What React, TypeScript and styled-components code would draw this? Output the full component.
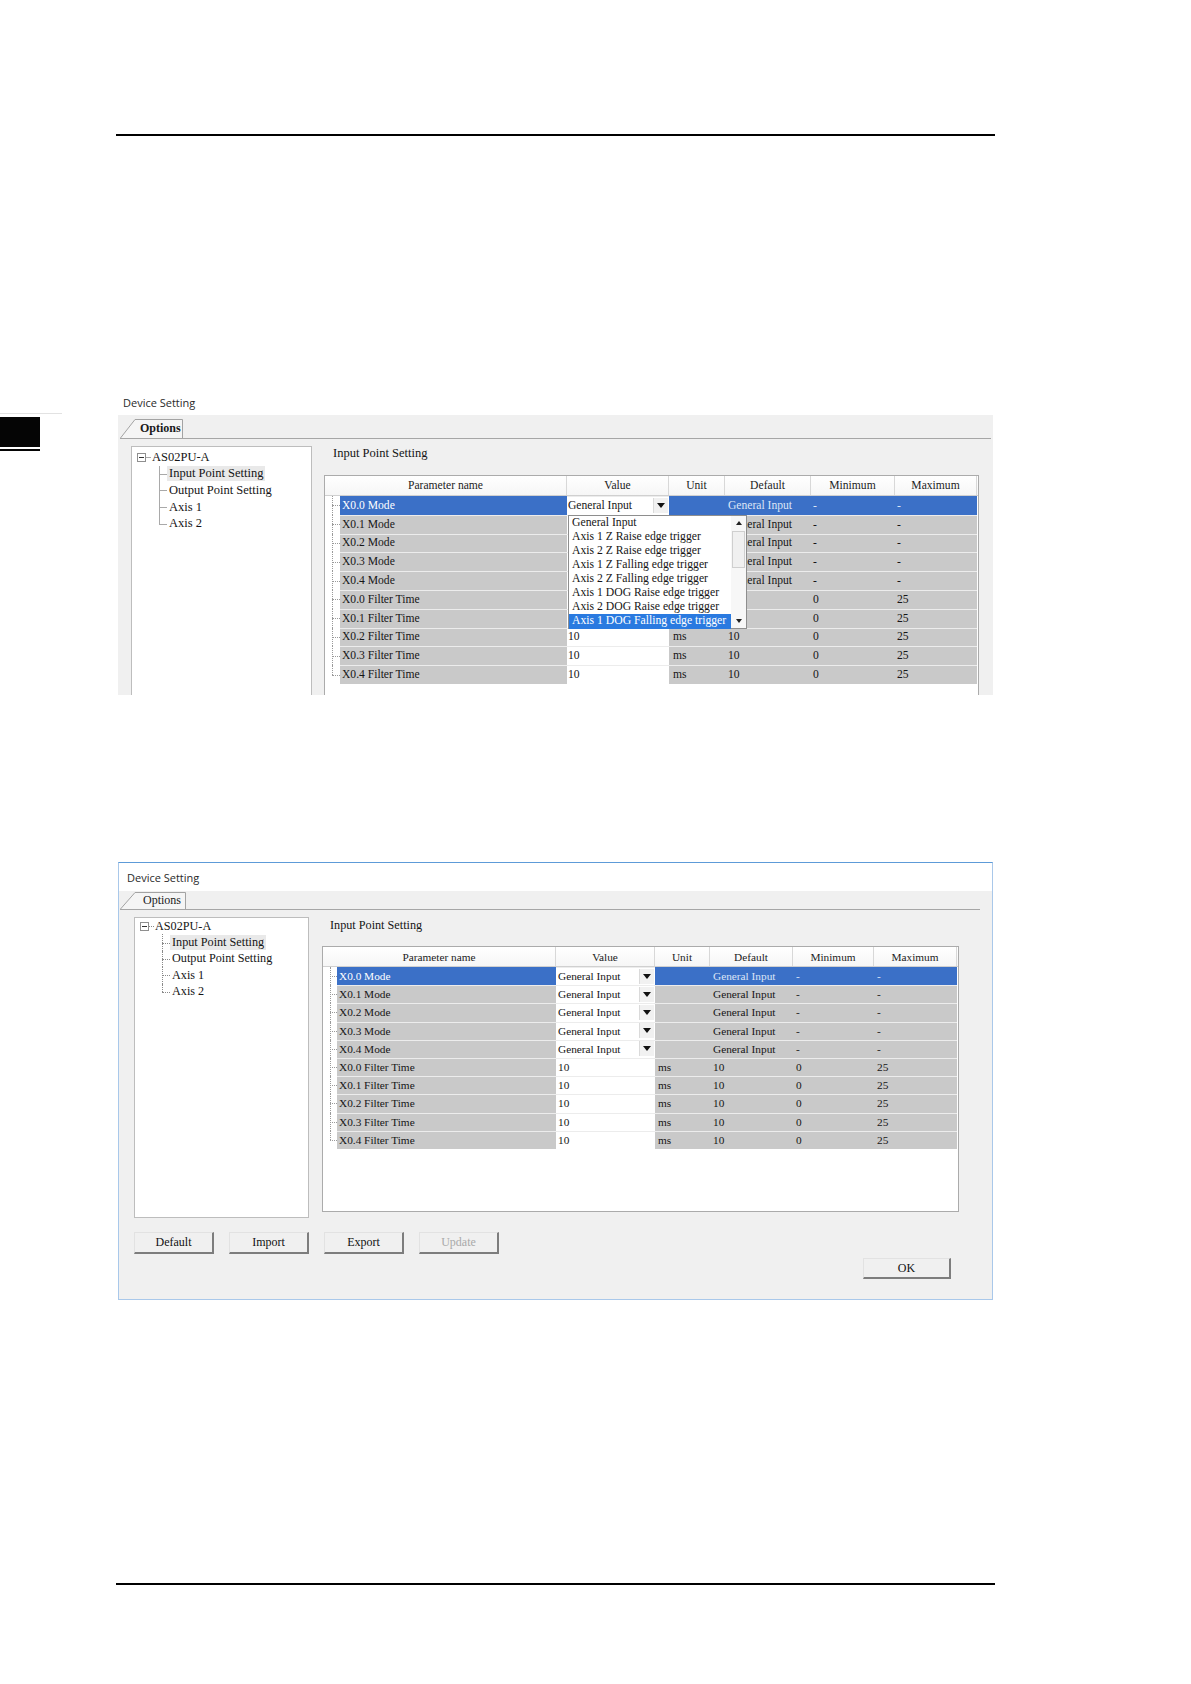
import React from 'react';
import styled, { createGlobalStyle } from 'styled-components';

const GlobalStyle = createGlobalStyle`
  html, body {
    margin: 0;
    padding: 0;
    background: #fff;
  }
  body {
    font-family: "Liberation Serif", "Times New Roman", serif;
    color: #111;
  }
  * {
    box-sizing: border-box;
  }
`;

type RowData = {
  name: string;
  value: string;
  combo: boolean;
  unit: string;
  def: string;
  min: string;
  max: string;
};

type Metrics = {
  cols: number[];
  pads: number[];
  rowH: number;
  headH: number;
  font: number;
};

const modeRow = (n: number): RowData => ({
  name: `X0.${n} Mode`,
  value: 'General Input',
  combo: true,
  unit: '',
  def: 'General Input',
  min: '-',
  max: '-',
});

const filterRow = (n: number): RowData => ({
  name: `X0.${n} Filter Time`,
  value: '10',
  combo: false,
  unit: 'ms',
  def: '10',
  min: '0',
  max: '25',
});

const rows: RowData[] = [0, 1, 2, 3, 4].map(modeRow).concat([0, 1, 2, 3, 4].map(filterRow));

const dropItems = [
  'General Input',
  'Axis 1 Z Raise edge trigger',
  'Axis 2 Z Raise edge trigger',
  'Axis 1 Z Falling edge trigger',
  'Axis 2 Z Falling edge trigger',
  'Axis 1 DOG Raise edge trigger',
  'Axis 2 DOG Raise edge trigger',
  'Axis 1 DOG Falling edge trigger',
];

const treeItems = ['Input Point Setting', 'Output Point Setting', 'Axis 1', 'Axis 2'];

const metrics1: Metrics = {
  cols: [15, 227, 102, 56, 86, 84, 82],
  pads: [0, 2, 1, 4, 3, 2, 2],
  rowH: 18.8,
  headH: 21,
  font: 11.6,
};

const metrics2: Metrics = {
  cols: [14, 219, 99, 55, 83, 81, 83],
  pads: [0, 2, 2, 3, 3, 3, 3],
  rowH: 18.2,
  headH: 21,
  font: 11.3,
};

// rows whose value/unit (and default) sit under the open list
const coveredValue = (i: number) => i >= 1 && i <= 6;
const coveredDefault = (i: number) => i === 5 || i === 6;

/* page furniture */

const Page = styled.div`
  width: 1191px;
  height: 1684px;
  padding-top: 134px;
  overflow: hidden;
`;

const Rule = styled.div<{ $top: number; $h: number }>`
  margin: ${(p) => p.$top}px 0 0 116px;
  width: 879px;
  height: ${(p) => p.$h}px;
  background: #000;
`;

const FigureRow = styled.div`
  display: flex;
  align-items: flex-start;
  margin-top: 259px;
`;

const Marker = styled.div`
  width: 62px;
  margin-top: 18px;
  display: flex;
  flex-direction: column;
`;

const FaintLine = styled.div`
  height: 1px;
  width: 62px;
  background: #e2e2e2;
`;

const MarkBlock = styled.div`
  margin-top: 3px;
  width: 40px;
  height: 30px;
  background: #050505;
`;

const MarkLine = styled.div`
  margin-top: 2px;
  width: 40px;
  height: 2px;
  background: #050505;
`;

/* dialog shells */

const Shot = styled.div`
  margin-left: 56px;
  width: 875px;
`;

const ShotTitle = styled.div`
  height: 20px;
  padding-left: 5px;
  font-family: "Open Sans", "Noto Sans", sans-serif;
  font-size: 11px;
  line-height: 16px;
  color: #2a2a2a;
`;

const Window = styled.div`
  margin: 167px 0 0 118px;
  width: 875px;
  height: 438px;
  border: 1px solid #a9c8ea;
  border-top-color: #5d9bd8;
  display: flex;
  flex-direction: column;
`;

const TitleBar = styled.div`
  height: 28px;
  flex-shrink: 0;
  background: #fff;
  padding-left: 8px;
  display: flex;
  align-items: center;
  font-family: "Open Sans", "Noto Sans", sans-serif;
  font-size: 11px;
  color: #2a2a2a;
`;

const Body = styled.div<{ $h?: number }>`
  background: #f0f0f0;
  display: flex;
  flex-direction: column;
  overflow: hidden;
  ${(p) => (p.$h ? `height: ${p.$h}px;` : 'flex: 1;')}
`;

const TabStrip = styled.div<{ $mt: number; $ml: number; $mr: number; $h: number }>`
  display: flex;
  flex-shrink: 0;
  height: ${(p) => p.$h}px;
  margin: ${(p) => `${p.$mt}px ${p.$mr}px 0 ${p.$ml}px`};
  border-bottom: 1px solid #a6a6a6;
`;

const TabShape = styled.div<{ $w: number; $bold?: boolean; $pad: number }>`
  position: relative;
  width: ${(p) => p.$w}px;
  height: 100%;
  padding-left: ${(p) => p.$pad}px;
  display: flex;
  align-items: center;
  font-size: 12px;
  font-weight: ${(p) => (p.$bold ? 700 : 400)};
  color: #1a1a1a;

  svg {
    position: absolute;
    left: 0;
    top: 0;
  }

  span {
    position: relative;
  }
`;

const Tab = ({ w, h, bold, pad }: { w: number; h: number; bold?: boolean; pad: number }) => (
  <TabShape $w={w} $bold={bold} $pad={pad}>
    <svg width={w} height={h} viewBox={`0 0 ${w} ${h}`}>
      <path
        d={`M0.5 ${h} L15 0.5 L${w - 0.5} 0.5 L${w - 0.5} ${h}`}
        fill="#f5f5f5"
        stroke="#a3a3a3"
        strokeWidth="1"
      />
    </svg>
    <span>Options</span>
  </TabShape>
);

const Content = styled.div<{ $mt: number; $pl: number; $gap: number }>`
  display: flex;
  align-items: flex-start;
  gap: ${(p) => p.$gap}px;
  margin-top: ${(p) => p.$mt}px;
  padding-left: ${(p) => p.$pl}px;
`;

/* tree */

const TreeBox = styled.div<{ $w: number; $h: number; $font: number; $pt: number }>`
  flex-shrink: 0;
  width: ${(p) => p.$w}px;
  height: ${(p) => p.$h}px;
  padding-top: ${(p) => p.$pt}px;
  background: #fff;
  border: 1px solid #bdbdbd;
  font-size: ${(p) => p.$font}px;
  color: #151515;
`;

const RootRow = styled.div<{ $h: number }>`
  height: ${(p) => p.$h}px;
  display: flex;
  align-items: center;
  padding-left: 5px;
`;

const Expander = styled.span`
  position: relative;
  width: 9px;
  height: 9px;
  border: 1px solid #8f8f8f;
  background: #fff;

  &::after {
    content: '';
    position: absolute;
    left: 1px;
    right: 1px;
    top: 3px;
    height: 1px;
    background: #333;
  }
`;

const RootTick = styled.span<{ $line: string }>`
  width: 5px;
  border-top: 1px ${(p) => p.$line};
`;

const RootText = styled.span`
  padding-left: 1px;
  line-height: 15px;
`;

const ChildRow = styled.div<{ $h: number; $last: boolean; $line: string }>`
  position: relative;
  height: ${(p) => p.$h}px;
  display: flex;
  align-items: center;
  padding-left: 37px;

  &::before {
    content: '';
    position: absolute;
    left: 27px;
    top: 0;
    height: ${(p) => (p.$last ? '50%' : '100%')};
    border-left: 1px ${(p) => p.$line};
  }

  &::after {
    content: '';
    position: absolute;
    left: 27px;
    top: 50%;
    width: 8px;
    border-top: 1px ${(p) => p.$line};
  }
`;

const ChildText = styled.span<{ $active?: boolean }>`
  line-height: 15px;
  padding: 0 2px;
  margin-left: -2px;
  background: ${(p) => (p.$active ? '#e9e9e9' : 'transparent')};
`;

const Tree = ({
  w,
  h,
  font,
  rowH,
  pt,
  line,
}: {
  w: number;
  h: number;
  font: number;
  rowH: number;
  pt: number;
  line: string;
}) => (
  <TreeBox $w={w} $h={h} $font={font} $pt={pt}>
    <RootRow $h={rowH}>
      <Expander />
      <RootTick $line={line} />
      <RootText>AS02PU-A</RootText>
    </RootRow>
    {treeItems.map((t, i) => (
      <ChildRow key={t} $h={rowH} $last={i === treeItems.length - 1} $line={line}>
        <ChildText $active={i === 0}>{t}</ChildText>
      </ChildRow>
    ))}
  </TreeBox>
);

/* right pane + grid */

const RightPane = styled.div<{ $w: number }>`
  width: ${(p) => p.$w}px;
  display: flex;
  flex-direction: column;
`;

const PaneLabel = styled.div<{ $pl: number; $mt: number; $font: number }>`
  padding-left: ${(p) => p.$pl}px;
  margin-top: ${(p) => p.$mt}px;
  font-size: ${(p) => p.$font}px;
  line-height: 14px;
  color: #151515;
`;

const Frame = styled.div<{ $mt: number; $h?: number; $font: number }>`
  margin-top: ${(p) => p.$mt}px;
  ${(p) => (p.$h ? `height: ${p.$h}px;` : 'height: 260px;')}
  border: 1px solid #ababab;
  background: #fff;
  font-size: ${(p) => p.$font}px;
`;

const HeadRow = styled.div<{ $cols: string; $h: number }>`
  display: grid;
  grid-template-columns: ${(p) => p.$cols};
  height: ${(p) => p.$h - 1}px;
  border-bottom: 1px solid #d0d0d0;
  background: linear-gradient(#ffffff, #f6f6f6);
`;

const HeadCell = styled.div<{ $span?: number }>`
  grid-column: span ${(p) => p.$span ?? 1};
  display: flex;
  align-items: center;
  justify-content: center;
  border-right: 1px solid #d8d8d8;
  color: #1c1c1c;
  white-space: nowrap;
`;

const DataRow = styled.div<{ $cols: string; $h: number }>`
  display: grid;
  grid-template-columns: ${(p) => p.$cols};
  height: ${(p) => p.$h}px;
`;

const Gutter = styled.div<{ $last: boolean }>`
  position: relative;
  background: #fff;

  &::before {
    content: '';
    position: absolute;
    left: 7px;
    top: 0;
    height: ${(p) => (p.$last ? '50%' : '100%')};
    border-left: 1px dotted #9a9a9a;
  }

  &::after {
    content: '';
    position: absolute;
    left: 7px;
    right: 0;
    top: 50%;
    border-top: 1px dotted #9a9a9a;
  }
`;

type Tone = 'gray' | 'white' | 'blue';

const toneBg: Record<Tone, string> = {
  gray: '#c9c9c9',
  white: '#ffffff',
  blue: '#3b70c7',
};

const Cell = styled.div<{ $tone: Tone; $pad: number; $soft?: boolean }>`
  position: relative;
  display: flex;
  align-items: center;
  justify-content: space-between;
  padding-left: ${(p) => p.$pad}px;
  white-space: nowrap;
  background: ${(p) => toneBg[p.$tone]};
  color: ${(p) => (p.$tone === 'blue' ? (p.$soft ? '#dbe5f6' : '#ffffff') : '#161616')};
  box-shadow: ${(p) => (p.$tone === 'blue' ? 'none' : 'inset 0 1px 0 #ececec')};
`;

const ComboArrow = styled.span`
  width: 15px;
  height: calc(100% - 3px);
  margin-right: 1px;
  background: #f1f1f1;
  border-left: 1px solid #dadada;
  display: flex;
  align-items: center;
  justify-content: center;

  &::after {
    content: '';
    border-left: 4px solid transparent;
    border-right: 4px solid transparent;
    border-top: 5px solid #111;
  }
`;

const DropList = styled.div`
  position: absolute;
  left: 1px;
  top: 100%;
  z-index: 5;
  width: 179px;
  height: 114px;
  background: #fff;
  border: 1px solid #8e8e8e;
  display: flex;
  font-size: 11.7px;
  color: #161616;
`;

const DropItems = styled.div`
  flex: 1;
  min-width: 0;
`;

const DropItem = styled.div<{ $hot?: boolean }>`
  height: 14.1px;
  line-height: 14px;
  padding-left: 3px;
  white-space: nowrap;
  overflow: hidden;
  background: ${(p) => (p.$hot ? '#2a7ae0' : 'transparent')};
  color: ${(p) => (p.$hot ? '#fff' : '#161616')};
`;

const ScrollBar = styled.div`
  width: 15px;
  flex-shrink: 0;
  display: flex;
  flex-direction: column;
  background: #f7f7f7;
`;

const ScrollBtn = styled.div<{ $up?: boolean }>`
  height: 14px;
  display: flex;
  align-items: center;
  justify-content: center;

  &::after {
    content: '';
    border-left: 3px solid transparent;
    border-right: 3px solid transparent;
    ${(p) => (p.$up ? 'border-bottom: 4px solid #222;' : 'border-top: 4px solid #222;')}
  }
`;

const Thumb = styled.div`
  height: 37px;
  margin: 1px 1px 0;
  background: #f0f0f0;
  border: 1px solid #cfcfcf;
`;

const Track = styled.div`
  flex: 1;
`;

const Dropdown = () => (
  <DropList>
    <DropItems>
      {dropItems.map((d, i) => (
        <DropItem key={d} $hot={i === dropItems.length - 1}>
          {d}
        </DropItem>
      ))}
    </DropItems>
    <ScrollBar>
      <ScrollBtn $up />
      <Thumb />
      <Track />
      <ScrollBtn />
    </ScrollBar>
  </DropList>
);

const Grid = ({ m, mt, h, open }: { m: Metrics; mt: number; h?: number; open?: boolean }) => {
  const cols = m.cols.map((c) => `${c}px`).join(' ');
  return (
    <Frame $mt={mt} $h={h} $font={m.font}>
      <HeadRow $cols={cols} $h={m.headH}>
        <HeadCell $span={2}>Parameter name</HeadCell>
        <HeadCell>Value</HeadCell>
        <HeadCell>Unit</HeadCell>
        <HeadCell>Default</HeadCell>
        <HeadCell>Minimum</HeadCell>
        <HeadCell>Maximum</HeadCell>
      </HeadRow>
      {rows.map((r, i) => {
        const sel = i === 0;
        const tone: Tone = sel ? 'blue' : 'gray';
        const hideValue = !!open && coveredValue(i);
        const hideDefault = !!open && coveredDefault(i);
        return (
          <DataRow key={r.name} $cols={cols} $h={m.rowH}>
            <Gutter $last={i === rows.length - 1} />
            <Cell $tone={tone} $pad={m.pads[1]}>
              {r.name}
            </Cell>
            <Cell $tone="white" $pad={m.pads[2]}>
              {!hideValue && <span>{r.value}</span>}
              {r.combo && !hideValue && <ComboArrow />}
              {sel && open && <Dropdown />}
            </Cell>
            <Cell $tone={tone} $pad={m.pads[3]}>
              {!hideValue && r.unit}
            </Cell>
            <Cell $tone={tone} $pad={m.pads[4]} $soft>
              {!hideDefault && r.def}
            </Cell>
            <Cell $tone={tone} $pad={m.pads[5]} $soft>
              {r.min}
            </Cell>
            <Cell $tone={tone} $pad={m.pads[6]} $soft>
              {r.max}
            </Cell>
          </DataRow>
        );
      })}
    </Frame>
  );
};

/* buttons */

const ButtonRow = styled.div`
  display: flex;
  gap: 15px;
  margin-top: 14px;
  padding-left: 15px;
`;

const OkRow = styled.div`
  display: flex;
  justify-content: flex-end;
  margin-top: 4px;
  padding-right: 41px;
`;

const Btn = styled.button<{ $w: number; $h: number }>`
  width: ${(p) => p.$w}px;
  height: ${(p) => p.$h}px;
  margin: 0;
  padding: 0;
  font-family: "Liberation Serif", "Times New Roman", serif;
  font-size: 12px;
  color: #111;
  background: #f0f0f0;
  border: none;
  border-top: 1px solid #e2e2e2;
  border-left: 1px solid #e2e2e2;
  border-right: 2px solid #7d7d7d;
  border-bottom: 2px solid #7d7d7d;

  &:disabled {
    color: #a9a9a9;
  }
`;

export default function App() {
  return (
    <>
      <GlobalStyle />
      <Page>
        <Rule $top={0} $h={2} />

        <FigureRow>
          <Marker>
            <FaintLine />
            <MarkBlock />
            <MarkLine />
          </Marker>
          <Shot>
            <ShotTitle>Device Setting</ShotTitle>
            <Body $h={280}>
              <TabStrip $mt={4} $ml={2} $mr={2} $h={20}>
                <Tab w={63} h={19} pad={20} bold />
              </TabStrip>
              <Content $mt={7} $pl={13} $gap={12}>
                <Tree w={181} h={300} font={12.5} rowH={16.6} pt={2} line="solid #a9a9a9" />
                <RightPane $w={655}>
                  <PaneLabel $pl={9} $mt={0} $font={12.5}>
                    Input Point Setting
                  </PaneLabel>
                  <Grid m={metrics1} mt={15} open />
                </RightPane>
              </Content>
            </Body>
          </Shot>
        </FigureRow>

        <Window>
          <TitleBar>Device Setting</TitleBar>
          <Body>
            <TabStrip $mt={1} $ml={1} $mr={12} $h={18}>
              <Tab w={66} h={17} pad={23} />
            </TabStrip>
            <Content $mt={7} $pl={15} $gap={13}>
              <Tree w={175} h={301} font={12.2} rowH={16.4} pt={0} line="dotted #8a8a8a" />
              <RightPane $w={637}>
                <PaneLabel $pl={8} $mt={1} $font={12.2}>
                  Input Point Setting
                </PaneLabel>
                <Grid m={metrics2} mt={14} h={266} />
              </RightPane>
            </Content>
            <ButtonRow>
              <Btn $w={80} $h={22}>Default</Btn>
              <Btn $w={80} $h={22}>Import</Btn>
              <Btn $w={80} $h={22}>Export</Btn>
              <Btn $w={80} $h={22} disabled>
                Update
              </Btn>
            </ButtonRow>
            <OkRow>
              <Btn $w={88} $h={21}>OK</Btn>
            </OkRow>
          </Body>
        </Window>

        <Rule $top={283} $h={1.5} />
      </Page>
    </>
  );
}
